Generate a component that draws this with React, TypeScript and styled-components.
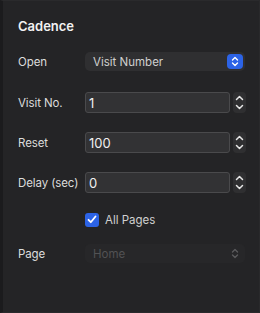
import React from "react";
import styled, { createGlobalStyle } from "styled-components";

const Global = createGlobalStyle`
  html, body { margin: 0; padding: 0; background: #212123; }
  body { width: 260px; height: 313px; overflow: hidden; font-family: Inter, "Noto Sans", "Liberation Sans", sans-serif; }
`;

const Frame = styled.div`
  width: 260px;
  height: 313px;
  display: flex;
  background: #212123;
`;

const Panel = styled.div`
  width: 244px;
  height: 311px;
  background: #242426;
  border-left: 3px solid #1b1b1d;
  border-right: 1px solid #29292b;
  border-top: 1px solid #2a2a2c;
  border-bottom: 1px solid #2a2a2c;
  display: flex;
  flex-direction: column;
  padding-left: 15px;
  box-sizing: content-box;
`;

const Title = styled.div`
  margin-top: 17px;
  height: 16px;
  line-height: 16px;
  font-size: 13px;
  font-weight: 600;
  color: #f2f2f2;
`;

const Row = styled.div<{ $top: number; $h: number }>`
  margin-top: ${(p) => p.$top}px;
  height: ${(p) => p.$h}px;
  display: grid;
  grid-template-columns: 67px 1fr;
  align-items: center;
`;

const Label = styled.span`
  font-size: 11.5px;
  letter-spacing: -0.1px;
  color: #dcdcdc;
`;

const Select = styled.div<{ $disabled?: boolean }>`
  width: 160px;
  height: 19px;
  border-radius: 5px;
  background: ${(p) => (p.$disabled ? "#272729" : "#2f2f31")};
  display: flex;
  align-items: center;
  justify-content: space-between;
  padding: 0 2px 0 8px;
  box-sizing: border-box;
  font-size: 11.5px;
  color: ${(p) => (p.$disabled ? "#525254" : "#cfcfcf")};
`;

const SelectButton = styled.div<{ $disabled?: boolean }>`
  width: 16px;
  height: 15px;
  border-radius: 4px;
  background: ${(p) => (p.$disabled ? "transparent" : "#2c63e6")};
  display: flex;
  align-items: center;
  justify-content: center;
`;

const NumberWrap = styled.div`
  display: flex;
  align-items: center;
  gap: 3px;
`;

const Input = styled.div`
  width: 145px;
  height: 21px;
  box-sizing: border-box;
  border: 1px solid #4a4a4c;
  border-radius: 3px;
  background: #323234;
  font-size: 13px;
  color: #f0f0f0;
  padding-left: 3px;
  display: flex;
  align-items: center;
`;

const Stepper = styled.div`
  width: 13px;
  height: 21px;
  border-radius: 4px;
  background: #2f2f31;
  display: flex;
  align-items: center;
  justify-content: center;
`;

const CheckRow = styled.label`
  display: flex;
  align-items: center;
  gap: 6px;
  font-size: 11.5px;
  color: #d0d0d0;
`;

const Box = styled.span`
  width: 14px;
  height: 14px;
  border-radius: 3px;
  background: #2c63e6;
  display: flex;
  align-items: center;
  justify-content: center;
`;

const Chevrons = ({ color }: { color: string }) => (
  <svg width={8} height={11} viewBox="0 0 8 11" fill="none">
    <path d="M1.5 4 L4 1.5 L6.5 4" stroke={color} strokeWidth="1.4" strokeLinecap="round" strokeLinejoin="round" />
    <path d="M1.5 7 L4 9.5 L6.5 7" stroke={color} strokeWidth="1.4" strokeLinecap="round" strokeLinejoin="round" />
  </svg>
);

const StepIcon = () => (
  <svg width="9" height="17" viewBox="0 0 9 17" fill="none">
    <path d="M1.5 5.5 L4.5 2.5 L7.5 5.5" stroke="#e6e6e6" strokeWidth="1.5" strokeLinecap="round" strokeLinejoin="round" />
    <path d="M1.5 11.5 L4.5 14.5 L7.5 11.5" stroke="#e6e6e6" strokeWidth="1.5" strokeLinecap="round" strokeLinejoin="round" />
  </svg>
);

const NumberField = ({ value }: { value: string }) => (
  <NumberWrap>
    <Input>{value}</Input>
    <Stepper>
      <StepIcon />
    </Stepper>
  </NumberWrap>
);

export default function App() {
  return (
    <Frame>
      <Global />
      <Panel>
        <Title>Cadence</Title>
        <Row $top={18} $h={19}>
          <Label>Open</Label>
          <Select>
            Visit Number
            <SelectButton>
              <Chevrons color="#ffffff" />
            </SelectButton>
          </Select>
        </Row>
        <Row $top={21} $h={21}>
          <Label>Visit No.</Label>
          <NumberField value="1" />
        </Row>
        <Row $top={19} $h={21}>
          <Label>Reset</Label>
          <NumberField value="100" />
        </Row>
        <Row $top={19} $h={21}>
          <Label>Delay (sec)</Label>
          <NumberField value="0" />
        </Row>
        <Row $top={19} $h={15}>
          <span />
          <CheckRow>
            <Box>
              <svg width="10" height="9" viewBox="0 0 10 9" fill="none">
                <path d="M1.5 4.8 L3.8 7.2 L8.5 1.5" stroke="#ffffff" strokeWidth="1.8" strokeLinecap="round" strokeLinejoin="round" />
              </svg>
            </Box>
            All Pages
          </CheckRow>
        </Row>
        <Row $top={17} $h={19}>
          <Label>Page</Label>
          <Select $disabled>
            Home
            <SelectButton $disabled>
              <Chevrons color="#5a5a5c" />
            </SelectButton>
          </Select>
        </Row>
      </Panel>
    </Frame>
  );
}
